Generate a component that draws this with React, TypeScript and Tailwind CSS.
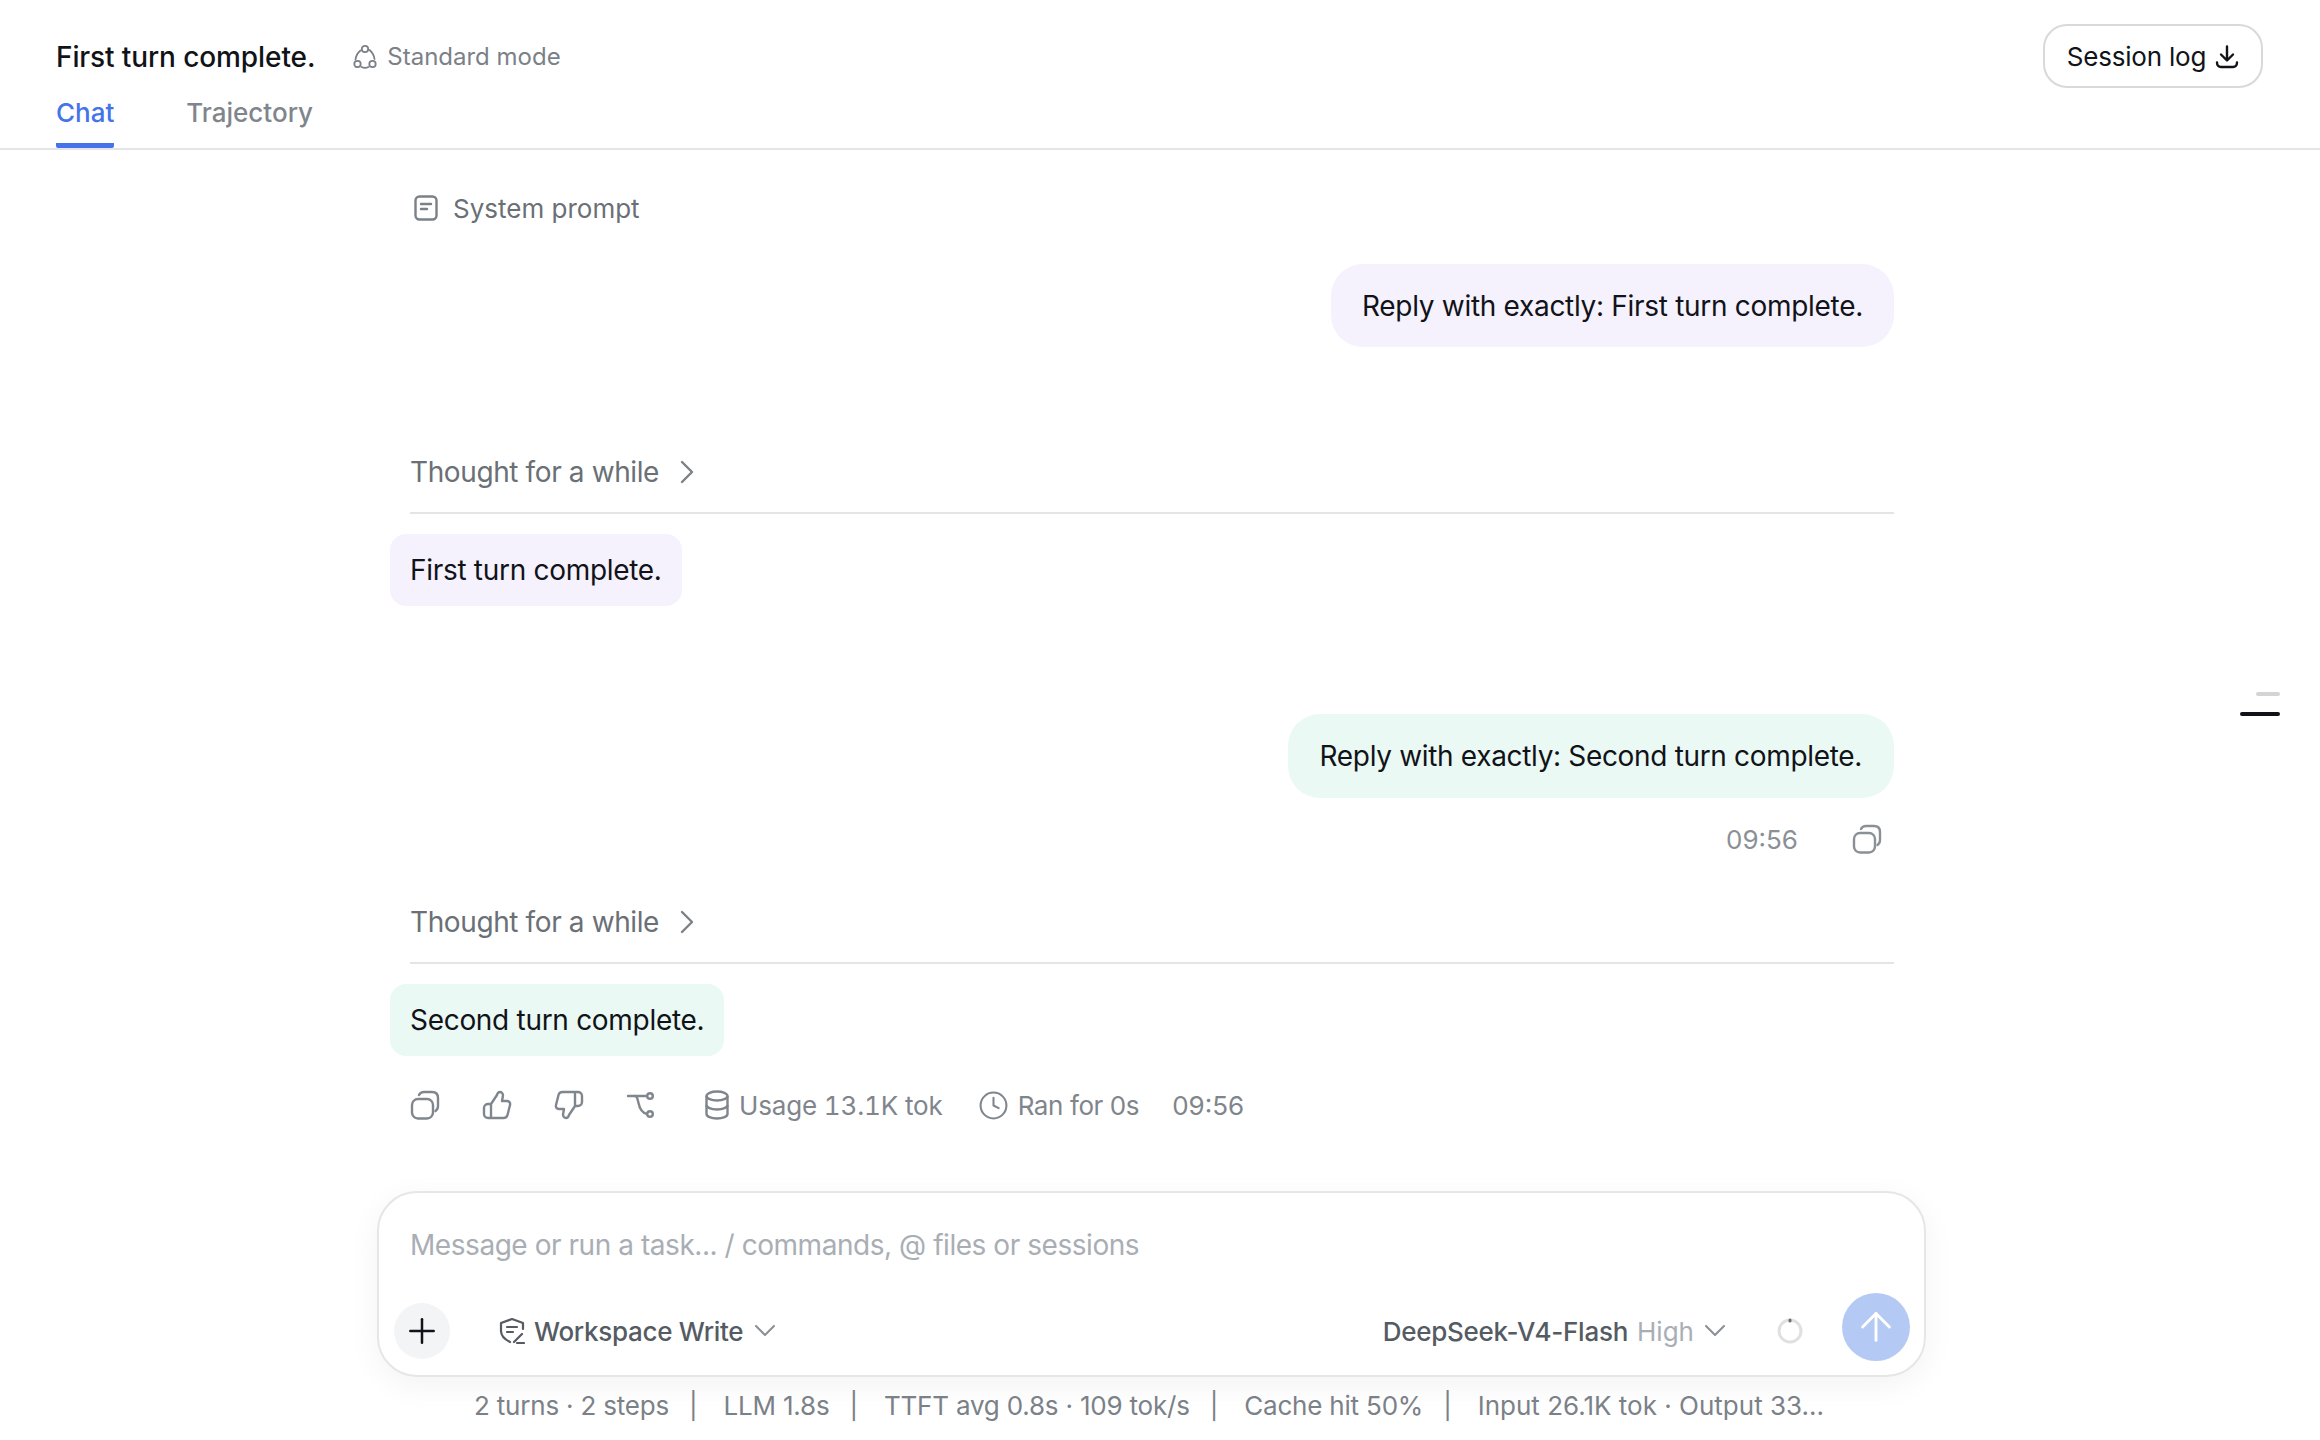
import React from 'react';
import { Plus, ArrowUp, Clock } from 'lucide-react';

const CopyIcon = () => (
  <svg width="30" height="30" viewBox="0 0 30 30" fill="none" stroke="currentColor" strokeWidth="2.4" strokeLinecap="round">
    <rect x="2" y="9" width="21" height="19.500" rx="6" />
    <path d="M9 5C10 3 12 2 14 2h8c4 0 6 2 6 6v8c0 2-1 4-2.500 5" />
  </svg>
);

const ThumbUp = () => (
  <svg width="30" height="30" viewBox="0 0 30 30" fill="none" stroke="currentColor" strokeWidth="2.4" strokeLinejoin="round" strokeLinecap="round">
    <path d="M9 14l6-9c.5-2 1.500-3 3-3 1.500 0 3 1.500 3 3.500L20 11h5c2.500 0 3.500 2 3 4l-2.500 10c-.5 2-2 3-4 3H6c-2 0-4-1.500-4-4v-6c0-2.500 2-4 4-4h3v14" />
  </svg>
);

const ThumbDown = () => (
  <svg width="30" height="30" viewBox="0 0 30 30" fill="none" stroke="currentColor" strokeWidth="2.4" strokeLinejoin="round" strokeLinecap="round">
    <path d="M21 16l-6 9c-.5 2-1.500 3-3 3-1.500 0-3-1.500-3-3.500L10 19H5c-2.500 0-3.500-2-3-4L4.500 5c.5-2 2-3 4-3H24c2 0 4 1.500 4 4v6c0 2.500-2 4-4 4h-3V2" />
  </svg>
);

const BranchIcon = () => (
  <svg width="30" height="30" viewBox="0 0 30 30" fill="none" stroke="currentColor" strokeWidth="2.4" strokeLinecap="round">
    <path d="M2 6h19" />
    <path d="M9 6c1.500 0 2 1 2.500 3l1 4c1 5 4 10 8.500 11" />
    <circle cx="24" cy="6" r="2.800" />
    <circle cx="24" cy="24" r="2.800" />
  </svg>
);

const DbIcon = () => (
  <svg width="24" height="30" viewBox="0 0 24 30" fill="none" stroke="currentColor" strokeWidth="2.400">
    <ellipse cx="12" cy="6" rx="10.500" ry="4.500" />
    <path d="M1.500 6v18c0 2.500 4.500 4.500 10.500 4.500S22.500 26.500 22.500 24V6" />
    <path d="M1.500 15c0 2.500 4.500 4.500 10.500 4.500S22.500 17.500 22.500 15" />
  </svg>
);

const DocIcon = () => (
  <svg width="24" height="26" viewBox="0 0 24 26" fill="none" stroke="currentColor" strokeWidth="2.4" strokeLinecap="round">
    <rect x="1.500" y="1.500" width="21" height="23" rx="4" />
    <path d="M7 9h10M7 14h6" />
  </svg>
);

const ModeIcon = () => (
  <svg width="24" height="26" viewBox="0 0 24 26" fill="none" stroke="currentColor" strokeWidth="1.800" strokeLinecap="round">
    <circle cx="12" cy="5" r="3.200" />
    <circle cx="4.500" cy="20" r="3.200" />
    <circle cx="19.500" cy="20" r="3.200" />
    <path d="M2.500 15.500C3 11.500 5 8.500 7.500 6.500M16.500 6c2.500 2 4.500 5 5 9M8.500 23c2 1 5 1 7 0" />
  </svg>
);

const ShieldIcon = () => (
  <svg width="26" height="28" viewBox="0 0 26 28" fill="none" stroke="currentColor" strokeWidth="2.200" strokeLinecap="round" strokeLinejoin="round">
    <path d="M11 25C5 22 2 19 2 14V6l11-4 11 4v6" />
    <path d="M8 10h10M8 15h6" />
    <path d="M15 25l8-8M18 26h7" />
  </svg>
);

const DownloadIcon = () => (
  <svg width="24" height="24" viewBox="0 0 24 24" fill="none" stroke="currentColor" strokeWidth="2.400" strokeLinecap="round" strokeLinejoin="round">
    <path d="M12 1.500V15M6 9.500l6 6 6-6" />
    <path d="M2 17.500c0 2.500 1.500 4.500 4 4.500h12c2.500 0 4-2 4-4.500" />
  </svg>
);

const RightChevron = () => (
  <svg width="14" height="24" viewBox="0 0 14 24" fill="none" stroke="#7b8188" strokeWidth="2.400" strokeLinecap="round" strokeLinejoin="round">
    <path d="M2 2l10 10L2 22" />
  </svg>
);

const DownChevron = () => (
  <svg width="20" height="12" viewBox="0 0 20 12" fill="none" stroke="#8b9097" strokeWidth="2" strokeLinecap="round" strokeLinejoin="round">
    <path d="M1 1l9 9 9-9" />
  </svg>
);

const Thought = () => (
  <div className="ml-[20px] flex h-[82px] items-center gap-[21px] border-b-2 border-[#e5e5e5] text-[28px] tracking-[-0.39px] text-[#6a7076]">
    <span>Thought for a while</span>
    <RightChevron />
  </div>
);

const App = () => {
  return (
    <div className="relative h-[1440px] overflow-hidden bg-white font-['Inter',sans-serif] text-[#111318]">
      {/* Header */}
      <header className="flex h-[150px] justify-between border-b-2 border-[#e5e5e5] pl-[56px] pr-[57px]">
        <div>
          <div className="flex h-[84px] items-center pt-[30px]">
            <span className="text-[28px] font-medium tracking-[-0.1px]">First turn complete.</span>
            <span className="ml-[38px] flex items-center gap-[10px] text-[24px] text-[#7b8188]">
              <ModeIcon />
              Standard mode
            </span>
          </div>
          <div className="flex gap-[72px] text-[26px] font-medium text-[#7f858c]">
            <span className="flex h-[64px] items-center rounded-b-[2px] border-b-[5px] border-[#4473ea] pb-[2px] text-[#4473ea]">Chat</span>
            <span className="flex h-[64px] items-center pb-[7px]">Trajectory</span>
          </div>
        </div>
        <div className="pt-[24px]">
          <button className="flex h-[64px] w-[220px] items-center justify-center gap-[9px] rounded-[24px] border-2 border-[#d9d9d9] pt-[1px] text-[26px] tracking-[-0.2px]">
            Session log
            <DownloadIcon />
          </button>
        </div>
      </header>

      {/* Messages */}
      <main className="ml-[390px] w-[1504px]">
        <div className="ml-[24px] flex h-[114px] items-center gap-[15px] pt-[2px] text-[26px] text-[#6a7076]">
          <span className="text-[#7b8188]"><DocIcon /></span>
          System prompt
        </div>
        <div className="flex justify-end">
          <div className="flex h-[83px] items-center rounded-[32px] bg-[#f5f2fe] px-[31px] text-[28px] tracking-[-0.3px]">
            Reply with exactly: First turn complete.
          </div>
        </div>
        <div className="h-[85px]" />
        <Thought />
        <div className="mt-[20px] w-fit rounded-[16px] bg-[#f5f2fe] px-[20px] py-[18px] text-[28px] leading-[36px] tracking-[-0.3px]">
          First turn complete.
        </div>
        <div className="flex justify-end pt-[108px]">
          <div className="flex h-[84px] items-center rounded-[32px] bg-[#ebf9f5] px-[32px] text-[28px] tracking-[-0.33px]">
            Reply with exactly: Second turn complete.
          </div>
        </div>
        <div className="flex h-[84px] items-center justify-end gap-[54px] pb-[2px] pr-[12px] text-[26px] text-[#8b9097]">
          <span>09:56</span>
          <CopyIcon />
        </div>
        <Thought />
        <div className="mt-[20px] w-fit rounded-[16px] bg-[#ebf9f5] px-[20px] py-[18px] text-[28px] leading-[36px] tracking-[-0.3px]">
          Second turn complete.
        </div>
        <div className="ml-[20px] mt-[27px] flex h-[44px] items-center text-[26px] text-[#7f858c]">
          <div className="flex gap-[42px] text-[#80868d]">
            <CopyIcon />
            <ThumbUp />
            <ThumbDown />
            <BranchIcon />
          </div>
          <span className="ml-[49px] flex items-center gap-[10px] tabular-nums tracking-[-0.15px]">
            <DbIcon />
            Usage 13.1K tok
          </span>
          <span className="ml-[35px] flex items-center gap-[9px] tracking-[-0.4px]">
            <Clock className="h-[31px] w-[31px]" strokeWidth={1.600} />
            Ran for 0s
          </span>
          <span className="ml-[33px]">09:56</span>
        </div>
      </main>

      {/* Composer */}
      <div className="ml-[377px] mt-[64px] h-[186px] w-[1549px] rounded-[40px] border-2 border-[#e6e6e6] bg-white shadow-[0_8px_32px_rgba(0,0,0,0.05)]">
        <div className="flex h-[105px] items-center pb-[2px] pl-[31px] text-[28px] tracking-[-0.45px] text-[#a9aeb5]">
          Message or run a task... / commands, @ files or sessions
        </div>
        <div className="flex items-center pl-[15px] pr-[14px] pt-[3px]">
          <div className="flex h-[56px] w-[56px] items-center justify-center rounded-full bg-[#f3f4f6] text-[#111318]">
            <Plus className="h-[40px] w-[40px]" strokeWidth={1.500} />
          </div>
          <div className="ml-[49px] flex items-center text-[#555b63]">
            <ShieldIcon />
            <span className="ml-[9px] mr-[12px] text-[26px] font-medium tracking-[-0.3px]">Workspace Write</span>
            <DownChevron />
          </div>
          <div className="ml-auto flex items-center">
            <span className="text-[26px] font-medium tracking-[-0.25px] text-[#555b63]">DeepSeek-V4-Flash</span>
            <span className="ml-[9px] mr-[11px] text-[26px] text-[#a9aeb5]">High</span>
            <DownChevron />
            <svg className="ml-[52px]" width="26" height="26" viewBox="0 0 26 26" fill="none" strokeWidth="3">
              <circle cx="13" cy="13" r="11" stroke="#e0e0e0" />
              <path d="M13 2v1" stroke="#6b7076" strokeLinecap="round" />
            </svg>
            <div className="-mt-[8px] ml-[39px] flex h-[68px] w-[68px] items-center justify-center rounded-full bg-[#b4c9f3] text-white">
              <ArrowUp className="h-[46px] w-[46px]" strokeWidth={1.500} />
            </div>
          </div>
        </div>
      </div>

      {/* Status line */}
      <div className="ml-[474px] mt-[9px] flex w-[1350px] justify-between text-[26px] leading-[40px] tracking-[-0.2px] text-[#7b8188]">
        <span>2 turns · 2 steps</span>
        <span className="-translate-x-[3px]">|</span>
        <span>LLM 1.8s</span>
        <span className="-translate-x-[3px]">|</span>
        <span>TTFT avg 0.8s · 109 tok/s</span>
        <span className="-translate-x-[3px]">|</span>
        <span>Cache hit 50%</span>
        <span className="-translate-x-[3px]">|</span>
        <span className="tracking-normal">Input 26.1K tok · Output 33...</span>
      </div>

      {/* Scroll marks */}
      <div className="absolute left-[2240px] top-[692px] flex w-[40px] flex-col items-end gap-[16px]">
        <div className="h-[4px] w-[24px] rounded-full bg-[#d4d4d4]" />
        <div className="h-[4px] w-[40px] rounded-full bg-[#111318]" />
      </div>
    </div>
  );
};

export default App;
